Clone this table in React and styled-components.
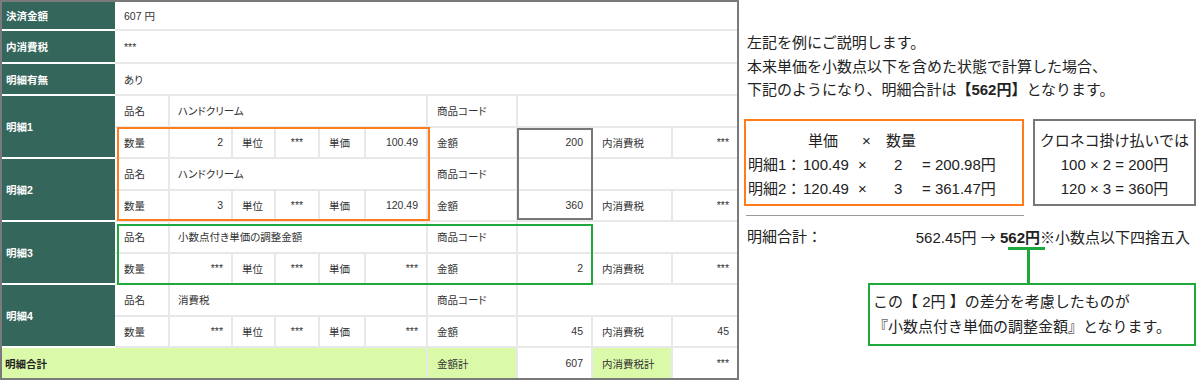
import styled, { createGlobalStyle } from "styled-components";

const GlobalStyle = createGlobalStyle`
    html, body {
        margin: 0;
        padding: 0;
        background: #fff;
    }

    body {
        font-family: "Liberation Sans", "Noto Sans CJK JP", sans-serif;
        color: #222;
    }

    * {
        box-sizing: border-box;
    }
`

const Page = styled.div`
    display: flex;
    align-items: flex-start;
    width: 1200px;
    height: 381px;
`

const Table = styled.div`
    position: relative;
    width: 739px;
    border: 2px solid #7a7a7a;
    font-size: 10.5px;
    font-feature-settings: "palt";
    color: #333;
`

const Section = styled.div`
    display: flex;
    height: ${p => p.$h}px;
`

const Label = styled.div`
    width: 113px;
    flex-shrink: 0;
    display: flex;
    align-items: center;
    padding-left: 4px;
    background: #35665c;
    border-bottom: 2px solid #fff;
    color: #fff;
    font-weight: 700;
`

const Body = styled.div`
    flex: 1;
    display: grid;
    grid-template-columns: 53px 61px 41px 42px 44px 60px 88px 73px 78px 64px;
    grid-auto-rows: 1fr;
    gap: 2px;
    padding-bottom: 2px;
    background: #e8e8e8;
`

const Footer = styled.div`
    display: grid;
    grid-template-columns: 424px 88px 73px 78px 64px;
    gap: 2px;
    height: 30px;
    background: #e8e8e8;
`

const Cell = styled.div`
    display: flex;
    align-items: center;
    justify-content: ${p => p.$align === "right" ? "flex-end" : p.$align === "center" ? "center" : "flex-start"};
    padding: 0 ${p => p.$label ? "8px 0 9px" : "8px"};
    grid-column: span ${p => p.$span || 1};
    background: ${p => p.$tint ? "#dbfaa9" : "#fff"};
    white-space: nowrap;
`

const TotalLabel = styled(Cell)`
    padding-left: 3px;
    font-weight: 700;
    color: #222;
`

const Highlight = styled.div`
    position: absolute;
    left: ${p => p.$x}px;
    top: ${p => p.$y}px;
    width: ${p => p.$w}px;
    height: ${p => p.$h}px;
    border: 2px solid ${p => p.$color};
    pointer-events: none;
`

const Panel = styled.div`
    display: flex;
    flex-direction: column;
    width: 452px;
    margin-left: 5px;
    padding-top: 31px;
    font-size: 15px;
    color: #222;
`

const Intro = styled.div`
    padding-left: 3px;
    line-height: 23.5px;

    b {
        font-weight: 700;
    }
`

const Boxes = styled.div`
    display: flex;
    gap: 9px;
    margin-top: 17px;
`

const CalcBox = styled.div`
    width: 280px;
    height: 87px;
    border: 2px solid #ff7b1c;
    padding: 8px 0 0 2px;
    display: grid;
    grid-template-columns: 55px 55px 28px 36px auto;
    grid-auto-rows: 24px;
    align-content: start;
    line-height: 24px;
`

const Calc = styled.span`
    padding-left: ${p => p.$pl || 0}px;
    white-space: nowrap;
`

const KuronekoBox = styled.div`
    width: 163px;
    height: 87px;
    border: 2px solid #777;
    padding-top: 8px;
    text-align: center;
    line-height: 24px;
    white-space: nowrap;
`

const Rule = styled.div`
    width: 278px;
    height: 1px;
    margin: 9px 0 0 2px;
    background: #999;
`

const TotalLine = styled.div`
    display: flex;
    justify-content: space-between;
    margin-top: 9px;
    padding: 0 6px 0 3px;
    line-height: 24px;
    white-space: nowrap;

    b {
        font-weight: 700;
    }
`

const Arrow = styled.span`
    font-family: "Noto Sans CJK JP", sans-serif;
`

const Callout = styled.div`
    position: relative;
    align-self: flex-end;
    width: 328px;
    height: 63px;
    margin-top: 33px;
    padding: 4px 0 0 3px;
    border: 2px solid #1fa83c;
    line-height: 25.5px;
    white-space: nowrap;

    &::before {
        content: "";
        position: absolute;
        left: 157px;
        top: -35px;
        width: 3px;
        height: 35px;
        background: #1fa83c;
    }

    &::after {
        content: "";
        position: absolute;
        left: 138px;
        top: -38px;
        width: 37px;
        height: 3px;
        background: #1fa83c;
    }
`

const details = [
    { label: "明細1", name: "ハンドクリーム", qty: "2", unit: "***", price: "100.49", amount: "200", tax: "***" },
    { label: "明細2", name: "ハンドクリーム", qty: "3", unit: "***", price: "120.49", amount: "360", tax: "***" },
    { label: "明細3", name: "小数点付き単価の調整金額", qty: "***", unit: "***", price: "***", amount: "2", tax: "***" },
    { label: "明細4", name: "消費税", qty: "***", unit: "***", price: "***", amount: "45", tax: "45" },
]

const calcRows = [
    { label: "明細1：", price: "100.49", qty: "2", result: "= 200.98円" },
    { label: "明細2：", price: "120.49", qty: "3", result: "= 361.47円" },
]

function Simple({ h, label, value }) {
    return (
        <Section $h={h}>
            <Label>{label}</Label>
            <Body>
                <Cell $span={10} $label>{value}</Cell>
            </Body>
        </Section>
    )
}

export default function App() {
    return (
        <Page>
            <GlobalStyle />
            <Table>
                <Simple h={29} label="決済金額" value="607 円" />
                <Simple h={33} label="内消費税" value="***" />
                <Simple h={32} label="明細有無" value="あり" />
                {details.map(d => (
                    <Section $h={63} key={d.label}>
                        <Label>{d.label}</Label>
                        <Body>
                            <Cell $label>品名</Cell>
                            <Cell $span={5}>{d.name}</Cell>
                            <Cell $label>商品コード</Cell>
                            <Cell $span={3} />
                            <Cell $label>数量</Cell>
                            <Cell $align="right">{d.qty}</Cell>
                            <Cell $label>単位</Cell>
                            <Cell $align="center">{d.unit}</Cell>
                            <Cell $label>単価</Cell>
                            <Cell $align="right">{d.price}</Cell>
                            <Cell $label>金額</Cell>
                            <Cell $align="right">{d.amount}</Cell>
                            <Cell $label>内消費税</Cell>
                            <Cell $align="right">{d.tax}</Cell>
                        </Body>
                    </Section>
                ))}
                <Footer>
                    <TotalLabel $tint>明細合計</TotalLabel>
                    <Cell $tint $label>金額計</Cell>
                    <Cell $align="right">607</Cell>
                    <Cell $tint $label>内消費税計</Cell>
                    <Cell $align="right">***</Cell>
                </Footer>
                <Highlight $x={115} $y={125} $w={313} $h={94} $color="#ff7b1c" />
                <Highlight $x={515} $y={126} $w={76} $h={92} $color="#777" />
                <Highlight $x={115} $y={222} $w={476} $h={61} $color="#1fa83c" />
            </Table>
            <Panel>
                <Intro>
                    左記を例にご説明します。<br />
                    本来単価を小数点以下を含めた状態で計算した場合、<br />
                    下記のようになり、明細合計は<b>【562円】</b>となります。
                </Intro>
                <Boxes>
                    <CalcBox>
                        <Calc />
                        <Calc $pl={5}>単価</Calc>
                        <Calc $pl={4}>×</Calc>
                        <Calc>数量</Calc>
                        <Calc />
                        {calcRows.map(r => [
                            <Calc key={r.label + "l"}>{r.label}</Calc>,
                            <Calc key={r.label + "p"}>{r.price}</Calc>,
                            <Calc key={r.label + "x"}>×</Calc>,
                            <Calc key={r.label + "q"} $pl={8}>{r.qty}</Calc>,
                            <Calc key={r.label + "r"}>{r.result}</Calc>,
                        ])}
                    </CalcBox>
                    <KuronekoBox>
                        クロネコ掛け払いでは<br />
                        100 × 2 = 200円<br />
                        120 × 3 = 360円
                    </KuronekoBox>
                </Boxes>
                <Rule />
                <TotalLine>
                    <span>明細合計：</span>
                    <span>562.45円 <Arrow>→</Arrow> <b>562円</b>※小数点以下四捨五入</span>
                </TotalLine>
                <Callout>
                    この【 2円 】の差分を考慮したものが<br />
                    『小数点付き単価の調整金額』となります。
                </Callout>
            </Panel>
        </Page>
    )
}
